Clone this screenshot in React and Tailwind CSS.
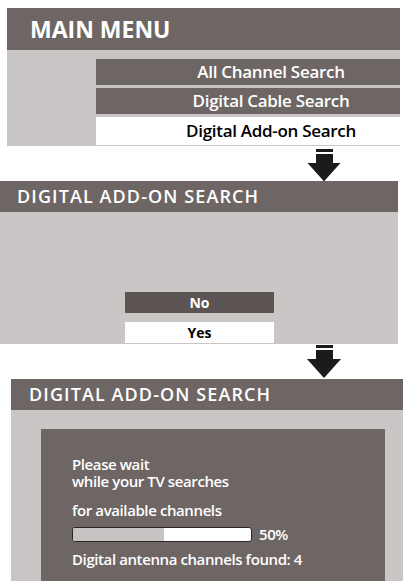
const font = { fontFamily: '"Open Sans", "Liberation Sans", sans-serif' }

function Arrow({ className = '' }) {
  return (
    <div className={`flex flex-col items-center ${className}`}>
      <div className="w-[17px] h-[3px] bg-[#1c1a1a]" />
      <div className="w-[17px] h-[9px] mt-[2px] bg-[#1c1a1a]" />
      <svg width="34" height="19" viewBox="0 0 34 19" className="block">
        <polygon points="0,0 34,0 17,19" fill="#1c1a1a" />
      </svg>
    </div>
  )
}

function MenuItem({ label, active }) {
  return (
    <div
      className={`flex items-center justify-center pl-[46px] text-[17px] font-semibold tracking-[-0.3px] ${
        active ? 'bg-white text-black h-[28px]' : 'bg-[#6e6664] text-white h-[26px]'
      }`}
    >
      {label}
    </div>
  )
}

export default function App() {
  return (
    <div className="w-[403px] h-[581px] bg-white overflow-hidden" style={font}>
      {/* main menu */}
      <div className="pt-[8px] pl-[7px] pr-[3px]">
        <div className="bg-[#6e6664] h-[42px] flex items-center pl-[23px]">
          <span className="text-white text-[23px] font-bold">MAIN MENU</span>
        </div>
        <div className="bg-[#cbc6c6] h-[96px] pt-[9px] pl-[89px] flex flex-col gap-[3px]">
          <MenuItem label="All Channel Search" />
          <MenuItem label="Digital Cable Search" />
          <MenuItem label="Digital Add-on Search" active />
        </div>
      </div>

      <div className="flex justify-end pr-[62px] pt-[3px] h-[35px]">
        <Arrow />
      </div>

      {/* confirm */}
      <div className="w-[398px]">
        <div className="bg-[#6e6664] h-[31px] flex items-center pl-[17px]">
          <span className="text-white text-[18px] font-semibold tracking-[1.1px]">DIGITAL ADD-ON SEARCH</span>
        </div>
        <div className="bg-[#cbc6c6] h-[132px] pt-[80px] flex flex-col items-center gap-[9px] pr-[124px] pl-[125px]">
          <div className="w-full h-[21px] bg-[#5c5452] text-white text-[14px] font-bold flex items-center justify-center">No</div>
          <div className="w-full h-[21px] bg-white text-black text-[14px] font-bold flex items-center justify-center">Yes</div>
        </div>
      </div>

      <div className="flex justify-end pr-[62px] pt-[1px] h-[35px]">
        <Arrow />
      </div>

      {/* searching */}
      <div className="pl-[11px]">
        <div className="bg-[#6e6664] h-[31px] flex items-center pl-[18px]">
          <span className="text-white text-[18px] font-semibold tracking-[1.1px]">DIGITAL ADD-ON SEARCH</span>
        </div>
        <div className="bg-[#cbc6c6] h-[200px] pt-[19px] pl-[30px] pr-[18px]">
          <div className="bg-[#6e6664] h-full pt-[27px] pl-[31px] text-white text-[15px] font-semibold tracking-[-0.4px]">
            <div className="leading-[17px]">
              Please wait
              <br />
              while your TV searches
            </div>
            <div className="leading-[17px] mt-[12px]">for available channels</div>
            <div className="flex items-center mt-[8px] h-[15px]">
              <div className="w-[180px] h-[15px] rounded-[3px] border border-[#2a2626] bg-white overflow-hidden flex">
                <div className="w-[91px] h-full bg-[#c8c3c3]" />
              </div>
              <span className="ml-[7px] leading-[15px]">50%</span>
            </div>
            <div className="leading-[17px] mt-[9px]">Digital antenna channels found: 4</div>
          </div>
        </div>
      </div>
    </div>
  )
}
